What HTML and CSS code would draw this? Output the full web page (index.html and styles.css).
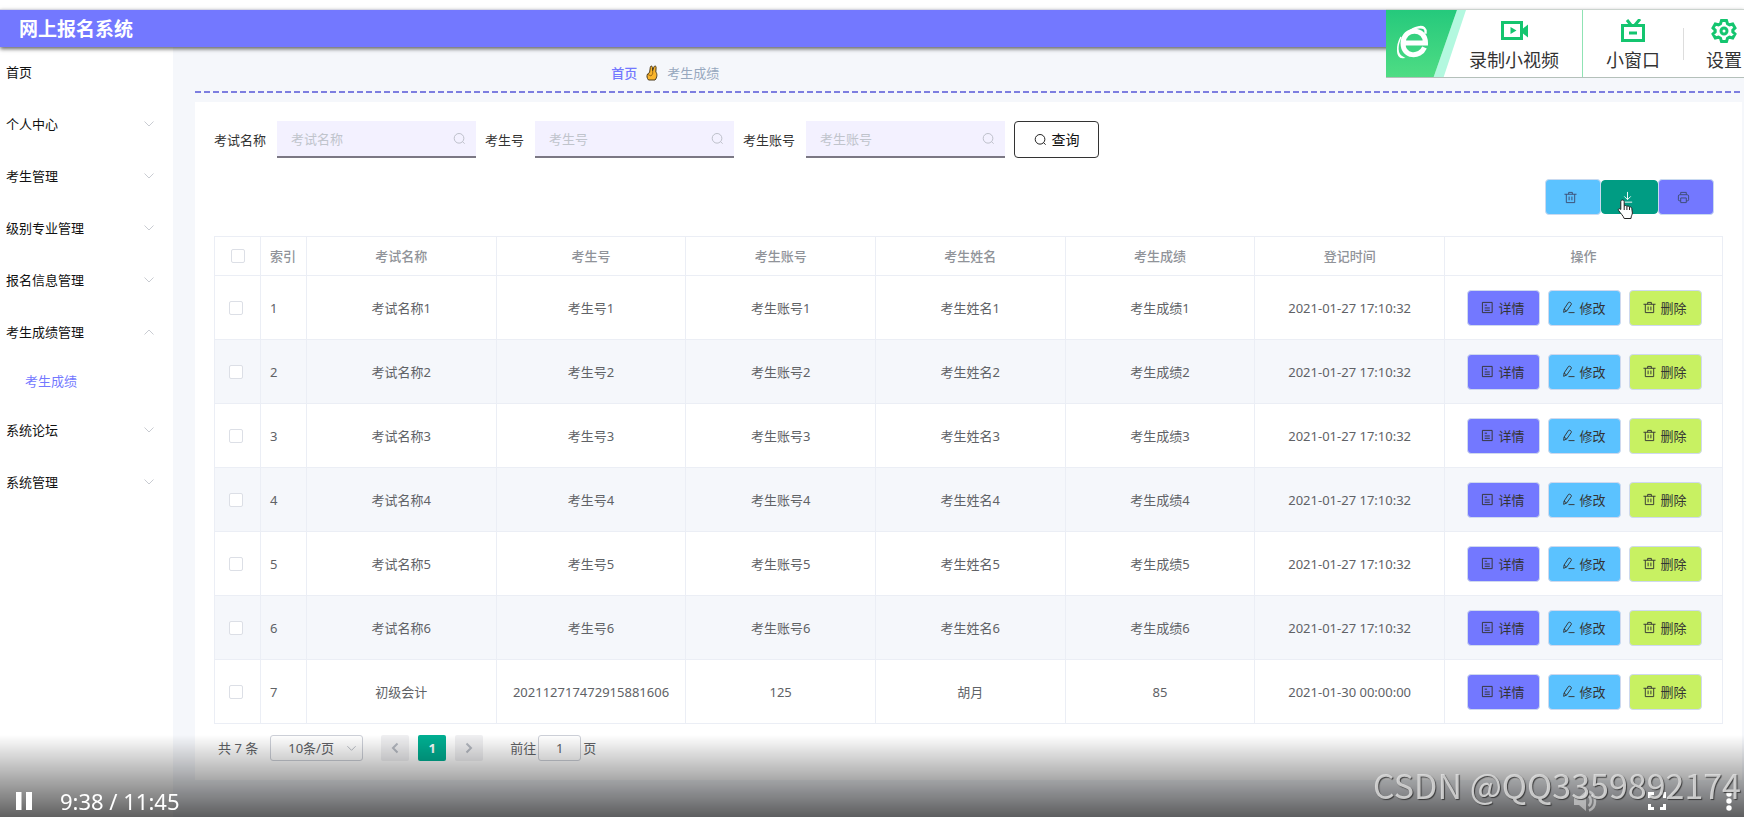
FILE: index.html
```html
<!DOCTYPE html>
<html lang="zh-CN">
<head>
<meta charset="utf-8">
<title>网上报名系统</title>
<link rel="stylesheet" href="styles.css">
</head>
<body>
<svg class="sprite" aria-hidden="true">
  <symbol id="i-down" viewBox="0 0 12 12"><path d="M1.5 3.5 6 8l4.500-4.500"/></symbol>
  <symbol id="i-search" viewBox="0 0 14 14"><circle cx="6.500" cy="6.800" r="5.200"/><path d="M10.300 10.400 12.500 12.600"/></symbol>
  <symbol id="i-doc" viewBox="0 0 14 14"><path d="M1.500 1.500h10.500v11h-10.500zM4 4.500h2.500M4 7.500h5.500M4 10h5.500"/></symbol>
  <symbol id="i-edit" viewBox="0 0 14 14"><path d="M7 1.500c1.500-.8 3.500.6 3 2.200L5 10.800 1.800 12.200 2.200 8.700zM2.200 8.700 5 10.800M7 12.500H13.500"/></symbol>
  <symbol id="i-trash" viewBox="0 0 14 14"><path d="M.5 3.500h13M2.500 3.500v9h9v-9M5 3.500v-2h4v2M5.500 6v4M8.500 6v4"/></symbol>
  <symbol id="i-download" viewBox="0 0 14 14"><path d="M7 1v8M3.500 5.800 7 9.300l3.500-3.500M2 12h10"/></symbol>
  <symbol id="i-print" viewBox="0 0 14 14"><path d="M4 4V1.500h6V4M4 10.500H2.500a1 1 0 0 1-1-1V5.500a1.500 1.500 0 0 1 1.500-1.500h8a1.500 1.500 0 0 1 1.500 1.500v4a1 1 0 0 1-1 1H10M4 7.500h6v5H4z"/></symbol>
</svg>

<header class="header"><h1 class="title">网上报名系统</h1></header>

<div class="layout">
  <nav class="sidebar">
    <a class="item" href="#"><span>首页</span></a>
    <a class="item" href="#"><span>个人中心</span><svg class="arrow"><use href="#i-down"/></svg></a>
    <a class="item" href="#"><span>考生管理</span><svg class="arrow"><use href="#i-down"/></svg></a>
    <a class="item" href="#"><span>级别专业管理</span><svg class="arrow"><use href="#i-down"/></svg></a>
    <a class="item" href="#"><span>报名信息管理</span><svg class="arrow"><use href="#i-down"/></svg></a>
    <a class="item" href="#"><span>考生成绩管理</span><svg class="arrow up"><use href="#i-down"/></svg></a>
    <a class="item sub" href="#"><span>考生成绩</span></a>
    <a class="item" href="#"><span>系统论坛</span><svg class="arrow"><use href="#i-down"/></svg></a>
    <a class="item" href="#"><span>系统管理</span><svg class="arrow"><use href="#i-down"/></svg></a>
  </nav>

  <main class="main">
    <div class="crumbs">
      <a class="crumb-home" href="#">首页</a>
      <svg class="hand" viewBox="0 0 12 16"><path d="M2.500 15C.8 13 .6 11 1.500 9L3.600 7.500 4.300 2.300c.2-1.600 1.900-1.600 2.100 0l.2 3.500L8 1.800c.5-1.300 2.300-.9 2.100.6L9.800 7c1.600 1.500 1.500 5.500-.8 8z" fill="#f9b52c" stroke="#4b3a1c"/><path d="M2 9.500l3 1.500 1.500-2M6.700 6v3" fill="none" stroke="#8a5a10" stroke-width=".8"/></svg>
      <span>考生成绩</span>
    </div>

    <section class="card">
      <form class="search">
        <label for="q1">考试名称</label>
        <div class="field"><input id="q1" type="text" placeholder="考试名称"><svg><use href="#i-search"/></svg></div>
        <label for="q2">考生号</label>
        <div class="field"><input id="q2" type="text" placeholder="考生号"><svg><use href="#i-search"/></svg></div>
        <label for="q3">考生账号</label>
        <div class="field"><input id="q3" type="text" placeholder="考生账号"><svg><use href="#i-search"/></svg></div>
        <button class="query" type="button"><svg class="icon"><use href="#i-search"/></svg>查询</button>
      </form>

      <div class="tools">
        <button class="tool sky" type="button" aria-label="删除"><svg class="icon"><use href="#i-trash"/></svg></button>
        <button class="tool green" type="button" aria-label="下载"><svg class="icon"><use href="#i-download"/></svg>
          <svg class="pointer" viewBox="0 0 18 22"><path d="M5.500 2c1 0 1.700.7 1.700 1.600V8c.8-.8 2.300-.6 2.700.4.900-.7 2.200-.3 2.600.7 1-.5 2.300.2 2.300 1.400l.6 4.500c0 1.500-1.400 3-1.400 5.500H7.200C6.500 18 2.800 14.500 1.500 12.300c-.8-1.500 1-2.300 2.300-.8V3.600C3.800 2.700 4.500 2 5.500 2zM7.200 8v4M9.900 8.400v3.600M12.500 9.100V12" fill="#fff" stroke="#222"/></svg>
        </button>
        <button class="tool violet" type="button" aria-label="打印"><svg class="icon"><use href="#i-print"/></svg></button>
      </div>

      <table class="grid">
        <colgroup><col class="c-small"><col class="c-small"><col><col><col><col><col><col><col class="c-ops"></colgroup>
        <thead>
          <tr><th class="pick"><input type="checkbox" aria-label="全选"></th><th class="num">索引</th><th>考试名称</th><th>考生号</th><th>考生账号</th><th>考生姓名</th><th>考生成绩</th><th>登记时间</th><th>操作</th></tr>
        </thead>
        <tbody>
          <tr><td class="pick"><input type="checkbox" aria-label="选择 1"></td><td class="num">1</td><td>考试名称1</td><td>考生号1</td><td>考生账号1</td><td>考生姓名1</td><td>考生成绩1</td><td>2021-01-27 17:10:32</td>
            <td><div class="ops"><button type="button" class="op violet"><svg class="icon"><use href="#i-doc"/></svg>详情</button><button type="button" class="op sky"><svg class="icon"><use href="#i-edit"/></svg>修改</button><button type="button" class="op lime"><svg class="icon"><use href="#i-trash"/></svg>删除</button></div></td></tr>
          <tr><td class="pick"><input type="checkbox" aria-label="选择 2"></td><td class="num">2</td><td>考试名称2</td><td>考生号2</td><td>考生账号2</td><td>考生姓名2</td><td>考生成绩2</td><td>2021-01-27 17:10:32</td>
            <td><div class="ops"><button type="button" class="op violet"><svg class="icon"><use href="#i-doc"/></svg>详情</button><button type="button" class="op sky"><svg class="icon"><use href="#i-edit"/></svg>修改</button><button type="button" class="op lime"><svg class="icon"><use href="#i-trash"/></svg>删除</button></div></td></tr>
          <tr><td class="pick"><input type="checkbox" aria-label="选择 3"></td><td class="num">3</td><td>考试名称3</td><td>考生号3</td><td>考生账号3</td><td>考生姓名3</td><td>考生成绩3</td><td>2021-01-27 17:10:32</td>
            <td><div class="ops"><button type="button" class="op violet"><svg class="icon"><use href="#i-doc"/></svg>详情</button><button type="button" class="op sky"><svg class="icon"><use href="#i-edit"/></svg>修改</button><button type="button" class="op lime"><svg class="icon"><use href="#i-trash"/></svg>删除</button></div></td></tr>
          <tr><td class="pick"><input type="checkbox" aria-label="选择 4"></td><td class="num">4</td><td>考试名称4</td><td>考生号4</td><td>考生账号4</td><td>考生姓名4</td><td>考生成绩4</td><td>2021-01-27 17:10:32</td>
            <td><div class="ops"><button type="button" class="op violet"><svg class="icon"><use href="#i-doc"/></svg>详情</button><button type="button" class="op sky"><svg class="icon"><use href="#i-edit"/></svg>修改</button><button type="button" class="op lime"><svg class="icon"><use href="#i-trash"/></svg>删除</button></div></td></tr>
          <tr><td class="pick"><input type="checkbox" aria-label="选择 5"></td><td class="num">5</td><td>考试名称5</td><td>考生号5</td><td>考生账号5</td><td>考生姓名5</td><td>考生成绩5</td><td>2021-01-27 17:10:32</td>
            <td><div class="ops"><button type="button" class="op violet"><svg class="icon"><use href="#i-doc"/></svg>详情</button><button type="button" class="op sky"><svg class="icon"><use href="#i-edit"/></svg>修改</button><button type="button" class="op lime"><svg class="icon"><use href="#i-trash"/></svg>删除</button></div></td></tr>
          <tr><td class="pick"><input type="checkbox" aria-label="选择 6"></td><td class="num">6</td><td>考试名称6</td><td>考生号6</td><td>考生账号6</td><td>考生姓名6</td><td>考生成绩6</td><td>2021-01-27 17:10:32</td>
            <td><div class="ops"><button type="button" class="op violet"><svg class="icon"><use href="#i-doc"/></svg>详情</button><button type="button" class="op sky"><svg class="icon"><use href="#i-edit"/></svg>修改</button><button type="button" class="op lime"><svg class="icon"><use href="#i-trash"/></svg>删除</button></div></td></tr>
          <tr><td class="pick"><input type="checkbox" aria-label="选择 7"></td><td class="num">7</td><td>初级会计</td><td>202112717472915881606</td><td>125</td><td>胡月</td><td>85</td><td>2021-01-30 00:00:00</td>
            <td><div class="ops"><button type="button" class="op violet"><svg class="icon"><use href="#i-doc"/></svg>详情</button><button type="button" class="op sky"><svg class="icon"><use href="#i-edit"/></svg>修改</button><button type="button" class="op lime"><svg class="icon"><use href="#i-trash"/></svg>删除</button></div></td></tr>
        </tbody>
      </table>

      <div class="pager">
        <span>共 7 条</span>
        <div class="size"><select aria-label="每页条数"><option>10条/页</option></select><svg><use href="#i-down"/></svg></div>
        <div class="pages">
          <button type="button" class="page" aria-label="上一页"><svg class="prev"><use href="#i-down"/></svg></button>
          <button type="button" class="page current">1</button>
          <button type="button" class="page" aria-label="下一页"><svg class="next"><use href="#i-down"/></svg></button>
        </div>
        <div class="jump"><label for="jump">前往</label><input id="jump" type="text" value="1"><span>页</span></div>
      </div>
    </section>
  </main>
</div>

<aside class="recorder">
  <div class="brand">
    <svg viewBox="0 0 80 69" preserveAspectRatio="none"><defs><linearGradient id="g" x1="0" y1="0" x2="0" y2="1"><stop offset="0" stop-color="#25c97c"/><stop offset="1" stop-color="#50dd84"/></linearGradient></defs><path d="M71 0h9L57 69H47z" fill="#b3f8df"/><path d="M0 0h71L47 69H0z" fill="url(#g)"/><path d="M17 33h22.500c.3-15.500-22-16-22.500 0 0 14.500 17 15 21.500 4.500" fill="none" stroke="#fff" stroke-width="5"/><path d="M39 23c2-8-11-6-18 0 7-7 20-10 19 0zM15 27c-4 8-5 17 2 20.500-7 1-6.500-12-2-20.500z" fill="#fff" stroke="#fff" stroke-width="1.500"/></svg>
  </div>
  <button class="rec-btn rec-video" type="button"><svg viewBox="0 0 28 24"><path d="M2.500 3.500h19v16h-19z"/><path class="solid" d="M23 9.500l5-4v13l-5-4zM10.500 8v7l6-3.500z"/></svg>录制小视频</button>
  <button class="rec-btn rec-window" type="button"><svg viewBox="0 0 28 24"><path d="M3.500 6.500h21v15h-21zM10 14h8M8 1l4 5M21 0l-5 6"/></svg>小窗口</button>
  <button class="rec-btn rec-set" type="button"><svg viewBox="0 0 28 24"><path d="M11.500 1.500h5l1 3.200 2 1.100 3.200-.8 2.300 4-2.200 2.200v1.600l2.200 2.200-2.300 4-3.200-.8-2 1.100-1 3.200h-5l-1-3.200-2-1.100-3.200.8-2.300-4 2.200-2.200v-1.600L3 9l2.300-4 3.200.8 2-1.100z"/><circle cx="14" cy="12" r="3"/></svg>设置</button>
</aside>

<footer class="player">
  <button class="ctl" type="button" aria-label="暂停"><svg viewBox="0 0 16 18" width="16" height="18"><path d="M0 0h5.500v18H0zM10 0h6v18h-6z"/></svg></button>
  <span class="time">9:38 / 11:45</span>
  <div class="ctl-right">
    <button class="ctl dim" type="button" aria-label="音量"><svg viewBox="0 0 24 24" width="24" height="24"><path d="M1 8h5l7-6v20l-7-6H1z"/><path d="M15.500 7c3 2 3 8 0 10M16 2.500c8 3 8 16 0 19" fill="none" stroke="#fff" stroke-width="2.500"/></svg></button>
    <button class="ctl" type="button" aria-label="全屏"><svg viewBox="0 0 18 18" width="18" height="18"><path d="M1.500 6V1.500H6M12 1.500h4.500V6M16.500 12v4.500H12M6 16.500H1.500V12" fill="none" stroke="#fff" stroke-width="3"/></svg></button>
    <button class="ctl more" type="button" aria-label="更多"><svg viewBox="0 0 6 20" width="6" height="20"><circle cx="3" cy="3" r="2.700"/><circle cx="3" cy="10" r="2.700"/><circle cx="3" cy="17" r="2.700"/></svg></button>
  </div>
</footer>
<div class="watermark">CSDN @QQ3359892174</div>
</body>
</html>
```

FILE: styles.css
```css
* { box-sizing: border-box; }

body {
  margin: 0;
  min-height: 100vh;
  padding-top: 9px;
  display: flex;
  flex-direction: column;
  position: relative;
  background: #fff;
  color: #606266;
  font: 13px/18px "Noto Sans", "Noto Sans CJK SC", sans-serif;
}

button, input, select { font: inherit; color: inherit; margin: 0; padding: 0; }
button { cursor: pointer; border: 0; }
a { text-decoration: none; color: inherit; }
svg { fill: none; stroke: currentColor; flex: none; }
.sprite { position: absolute; width: 0; height: 0; }
.icon { width: 13px; height: 13px; }

.header {
  position: relative;
  z-index: 1;
  height: 38px;
  padding: 0 19px;
  display: flex;
  align-items: center;
  background: #7378ff;
  border-top: 1px solid #d5d5e2;
  box-shadow: 0 2px 4px rgba(0, 0, 0, 0.6);
}
.title { margin: 0; color: #fff; font-size: 19px; line-height: 24px; }

.layout { display: flex; flex: 1; }

.sidebar { width: 173px; flex: none; background: #fff; color: #111; }
.item {
  height: 52px;
  padding: 0 18px 2px 6px;
  display: flex;
  align-items: center;
  justify-content: space-between;
}
.sub { height: 46px; padding-left: 25px; color: #7378ff; }
.arrow { width: 12px; height: 12px; color: #c9ccd2; }
.up { transform: rotate(180deg); }

.main { flex: 1; min-width: 0; padding: 0 2px 0 22px; background: #f5f7fb; }
.crumbs {
  display: flex;
  align-items: center;
  gap: 9px;
  padding: 17px 0 11px 26.9%;
  color: #97a8be;
  background: repeating-linear-gradient(90deg, #7d7ee0 0 6px, transparent 6px 9px) left bottom / 100% 2px no-repeat;
}
.crumb-home { color: #7378ff; font-weight: 500; }
.hand { width: 12px; height: 16px; }

.card { margin-top: 9px; padding: 19px; background: #fff; }

.search { display: flex; align-items: center; color: #333; }
.field { position: relative; width: 199px; margin: 0 9px 0 11px; }
.field input {
  display: block;
  width: 100%;
  height: 37px;
  padding: 0 32px 0 14px;
  border: 0;
  border-bottom: 2px solid #7b7884;
  background: #f3f1ff;
}
.field input::placeholder { color: #c0c4cc; opacity: 1; }
.field svg { position: absolute; right: 10px; top: 11px; width: 13px; height: 13px; color: #b9bcc6; }
.query {
  display: flex;
  align-items: center;
  justify-content: center;
  gap: 5px;
  width: 85px;
  height: 37px;
  border: 1px solid #333;
  border-radius: 4px;
  background: #fff;
  color: #111;
  font-size: 14px;
}

.tools { display: flex; justify-content: flex-end; align-items: center; margin: 21px 9px; }
.tool {
  position: relative;
  display: flex;
  align-items: center;
  justify-content: center;
  width: 56px;
  height: 36px;
  padding-right: 5px;
  border: 1px solid #c9daf0;
  border-radius: 4px;
  color: #3c4c70;
}
.violet { background: #7378ff; }
.sky { background: #5bc2ff; }
.lime { background: #c8f162; }
.tool.green { width: 57px; height: 34px; background: #009c83; border-color: #009c83; color: #fff; }
.pointer { position: absolute; left: 15px; top: 16px; width: 18px; height: 24px; }

.grid { width: 100%; table-layout: fixed; border-collapse: collapse; text-align: center; }
.c-small { width: 46px; }
.c-ops { width: 278px; }
.grid th, .grid td { border: 1px solid #ebeef5; padding: 0; }
.grid th { height: 39px; color: #909399; font-weight: 500; }
.grid td { height: 64px; }
.grid tbody tr:nth-child(even) { background: #f5f7fb; }
.grid .num { text-align: left; padding-left: 9px; }
.grid .pick { text-align: left; padding-left: 14px; }
.grid th.pick { padding-left: 16px; }
.pick input {
  display: block;
  appearance: none;
  width: 14px;
  height: 14px;
  border: 1px solid #dcdfe6;
  border-radius: 2px;
  background: #fff;
}

.ops { display: flex; justify-content: center; gap: 8px; padding-left: 1px; }
.op {
  display: flex;
  align-items: center;
  justify-content: center;
  gap: 4px;
  width: 73px;
  height: 36px;
  border: 1px solid #cfd9ee;
  border-radius: 4px;
  color: #333;
}

.pager { display: flex; align-items: center; gap: 12px; padding: 11px 4px 0; }
.size { position: relative; width: 93px; }
.size select {
  display: block;
  appearance: none;
  width: 100%;
  height: 26px;
  padding: 0 17px;
  border: 1px solid #cdd0d8;
  border-radius: 3px;
  background: #fff;
}
.size svg { position: absolute; right: 6px; top: 8px; width: 11px; height: 11px; color: #b4b8c0; }
.pages { display: flex; gap: 9px; margin: 0 15px 0 6px; }
.page {
  display: flex;
  align-items: center;
  justify-content: center;
  width: 28px;
  height: 26px;
  border-radius: 2px;
  background: #f0f0f2;
  color: #b4b8c0;
}
.page svg { width: 12px; height: 12px; stroke-width: 2; }
.prev { transform: rotate(90deg); }
.next { transform: rotate(-90deg); }
.page.current { background: #00af92; color: #fff; font-weight: 700; }
.jump { display: flex; align-items: center; gap: 2px; }
.jump input {
  width: 43px;
  height: 26px;
  border: 1px solid #cdd0d8;
  border-radius: 3px;
  background: #fff;
  text-align: center;
}

.recorder {
  position: absolute;
  z-index: 2;
  top: 9px;
  right: 0;
  display: flex;
  width: 358px;
  height: 69px;
  overflow: hidden;
  background: #fff;
  border-top: 1px solid #cbd3ce;
  border-bottom: 1px solid #b4c0ba;
  color: #333;
}
.brand svg { display: block; width: 80px; height: 69px; stroke: none; }
.rec-btn {
  display: flex;
  flex-direction: column;
  align-items: center;
  justify-content: center;
  gap: 4px;
  flex: none;
  padding-top: 4px;
  background: none;
  font-size: 18px;
  line-height: 26px;
  white-space: nowrap;
}
.rec-btn svg { width: 28px; height: 24px; color: #14c56f; stroke-width: 3; }
.rec-btn .solid { fill: currentColor; stroke: none; }
.rec-video { width: 117px; padding-right: 20px; border-right: 1px solid #8fe3b4; }
.rec-window { width: 100px; }
.rec-set { width: 82px; background: linear-gradient(#ddd, #ddd) left center / 1px 32px no-repeat; }

.player {
  position: fixed;
  z-index: 3;
  left: 0;
  right: 0;
  bottom: 0;
  display: flex;
  align-items: flex-end;
  gap: 28px;
  height: 82px;
  padding: 0 12px 2px 16px;
  background: linear-gradient(rgba(0, 0, 0, 0), rgba(0, 0, 0, 0.62));
  color: #fff;
}
.ctl { display: flex; align-items: center; height: 28px; background: none; }
.ctl svg { fill: #fff; stroke: none; }
.dim { opacity: 0.45; }
.more { padding-left: 9px; }
.time { font-size: 22px; line-height: 28px; }
.ctl-right { display: flex; gap: 51px; margin-left: auto; }

.watermark {
  position: fixed;
  z-index: 4;
  right: 3px;
  bottom: 11px;
  color: rgba(225, 225, 225, 0.85);
  font: 400 34px/42px "Noto Sans CJK SC", sans-serif;
  text-shadow: 1px 1px 1px rgba(40, 40, 40, 0.8);
  white-space: nowrap;
  pointer-events: none;
}
```
